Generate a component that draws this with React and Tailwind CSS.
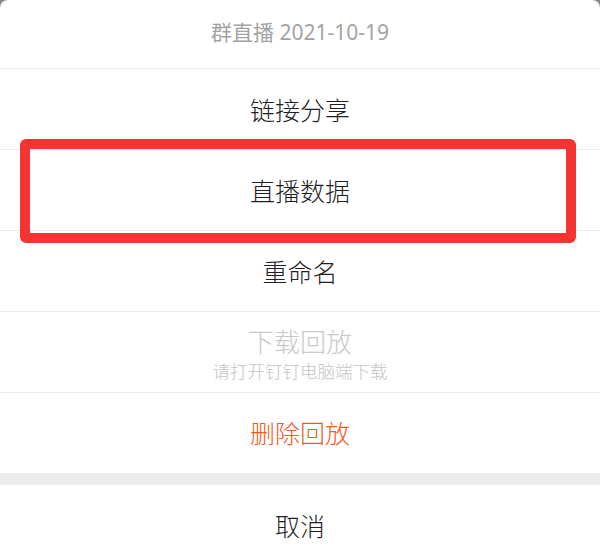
import React from "react";

const font = { fontFamily: '"Noto Sans", "Noto Sans CJK SC", sans-serif' };

const Row = ({ children, className = "pt-[3px]" }) => (
  <div
    className={`h-[81px] border-b border-[#ececec] flex flex-col items-center justify-center ${className}`}
  >
    {children}
  </div>
);

export default function App() {
  return (
    <div className="w-[600px] h-[555px] overflow-hidden bg-[#8a8a8a] font-light" style={font}>
      <div className="relative bg-white rounded-t-[8px]">
        <div className="h-[69px] border-b border-[#ececec] flex items-center justify-center pb-[2px]">
          <span className="text-[21px] font-normal text-[#a3a3a3]">群直播 2021-10-19</span>
        </div>

        <Row>
          <span className="text-[25px] text-[#1f1f1f]">链接分享</span>
        </Row>
        <Row>
          <span className="text-[25px] text-[#1f1f1f]">直播数据</span>
        </Row>
        <Row>
          <span className="text-[25px] text-[#1f1f1f]">重命名</span>
        </Row>
        <Row className="pt-[7px]">
          <span className="text-[26px] leading-[31px] text-[#c9c9c9]">下载回放</span>
          <span className="text-[17.5px] leading-[27px] text-[#c4c4c4]">请打开钉钉电脑端下载</span>
        </Row>
        <div className="h-[80px] pt-[2px] flex items-center justify-center">
          <span className="text-[25px] text-[#f05a24]">删除回放</span>
        </div>

        <div className="h-[12px] bg-[#ebebeb]" />

        <div className="h-[81px] pt-[3px] flex items-center justify-center">
          <span className="text-[25px] text-[#1f1f1f]">取消</span>
        </div>

        {/* highlight box drawn over the rows */}
        <div className="absolute left-[20px] top-[139px] w-[556px] h-[104px] border-[10px] border-[#f53333] rounded-[6px]" />
      </div>
    </div>
  );
}
